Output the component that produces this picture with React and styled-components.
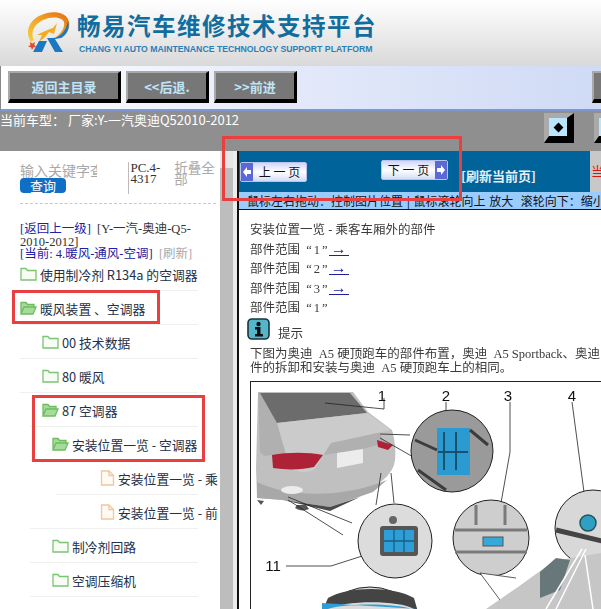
import React from "react";
import styled, { createGlobalStyle } from "styled-components";

const cjk = `"Noto Sans CJK SC", "Liberation Sans", sans-serif`;
const serif = `"Liberation Serif", "Noto Sans CJK SC", serif`;

const GlobalStyle = createGlobalStyle`
  html, body { margin: 0; padding: 0; background: #fff; overflow: hidden; }
  * { box-sizing: border-box; }
`;

const treeRows = [
  { label: "使用制冷剂 R134a 的空调器", indent: 20, line: 0, icon: "closed" },
  { label: "暖风装置 、空调器", indent: 20, line: 0, icon: "open" },
  { label: "00 技术数据", indent: 42, line: 0, icon: "closed" },
  { label: "80 暖风", indent: 42, line: 0, icon: "closed" },
  { label: "87 空调器", indent: 42, line: 10, icon: "open" },
  { label: "安装位置一览 - 空调器", indent: 52, line: 10, icon: "open" },
  { label: "安装位置一览 - 乘客车厢外的部件", indent: 100, line: 36, icon: "doc" },
  { label: "安装位置一览 - 前部车厢", indent: 100, line: 10, icon: "doc" },
  { label: "制冷剂回路", indent: 52, line: 10, icon: "closed" },
  { label: "空调压缩机", indent: 52, line: 10, icon: "closed" },
];

const ranges = ["1", "2", "3"];

const TreeIcon = ({ type }) => {
  if (type === "doc") {
    return (
      <svg width="15" height="16" viewBox="0 0 15 16" fill="#fffaf4" stroke="#f0c89c" strokeWidth="1.3">
        <path d="M1.5 1h7.5l4.5 4.5V15h-12zM9 1v4.5h4.5" />
      </svg>
    );
  }
  if (type === "open") {
    return (
      <svg width="17" height="14" viewBox="0 0 17 14" fill="#a6dc9a" stroke="#6fbb62" strokeWidth="1.3">
        <path d="M1 13V1.5h5l1.5 2H14V6M1 13l3-7h12l-3 7z" />
      </svg>
    );
  }
  return (
    <svg width="17" height="14" viewBox="0 0 17 14" fill="#f7fcf5" stroke="#7cc474" strokeWidth="1.3">
      <path d="M1 13V1.5h5l1.5 2H16V13z" />
    </svg>
  );
};

const Logo = () => (
  <svg width="46" height="41" viewBox="0 0 46 41">
    <defs>
      <linearGradient id="ring" x1="0" y1="1" x2="1" y2="0">
        <stop offset="0" stopColor="#f8d040" />
        <stop offset=".6" stopColor="#f09a20" />
        <stop offset="1" stopColor="#e56a14" />
      </linearGradient>
    </defs>
    <path d="M6 30C0 21 3 10 14 4 25-2 39-1 43 7c3 6 1 13-6 19l-6-1c6-5 9-10 8-15-2-5-12-6-21-2C9 12 5 21 9 28z" fill="url(#ring)" />
    <path d="M12 23c5-3 10-5 16-7l4-5-3 11-5-2-4 5-6 5 3-7z" fill="#f5ab1e" />
    <path d="M5 30l2.5 1.6L10 30l-.7 3 2.2 2-3 .2L7 38l-1-2.8-3-.4 2.4-1.9z" fill="#e2502a" />
    <path d="M43 9c2 6 0 13-7 17l-6 1 8 13h-8l-8-14h5c8 0 14-7 16-17z" fill="#1b78c2" />
    <path d="M14 29h8l-5 11H8z" fill="#1b78c2" />
  </svg>
);

const InfoIcon = () => (
  <svg width="23" height="22" viewBox="0 0 23 22">
    <rect x="1" y="1" width="21" height="20" rx="4" fill="#55b5c9" stroke="#16333d" strokeWidth="1.6" />
    <circle cx="11.5" cy="6" r="2.2" fill="#111" />
    <path d="M8 9h5.5v7H16v2.5H8V16h2v-4.5H8z" fill="#111" />
  </svg>
);

const NavArrow = ({ left }) => (
  <svg width="8" height="10" viewBox="0 0 8 10">
    <path d={left ? "M0 5l4-5v3h4v4H4v3z" : "M8 5L4 0v3H0v4h4v3z"} fill="#fff" />
  </svg>
);

const Diagram = () => (
  <svg width="350" height="227" viewBox="251 382 350 227">
    <rect x="251" y="382" width="350" height="227" fill="#fff" />
    <path d="M258 392h95l15 20 24 18c3 10 4 22 3 30-1 10-8 18-20 26-14 9-30 16-45 21-18-3-34-6-47-7l-26-2-1-30z" fill="#c0c0c0" />
    <path d="M258 392l2 60 4 4 8-1 51 0 14-2 26-4 22-6-17-30-90 10-17-30z" fill="#b0b0b0" />
    <path d="M260 393h90l17 20-90 10z" fill="#6c6c6c" />
    <path d="M277 423l90-10 24 17-60 13-17 27c-8 3-16 2-22 0l-5-12-10-35z" fill="#cbcbcb" />
    <path d="M272 455c16-3 36-3 51 0l-9 12c-12 3-28 3-41 1z" fill="#ad2237" />
    <path d="M377 440l16 5-5 5-10-3z" fill="#ad2237" />
    <path d="M337 453l26-4v14l-26 5z" fill="#ececec" />
    <path d="M257 482c32 16 88 16 130-2l-14 12-43 15-47-7-26-2z" fill="#a8a8a8" />
    <path d="M283 500l47 7 30-10-30 14z" fill="#4a4a4a" />
    <ellipse cx="292" cy="490" rx="11" ry="4" fill="#ececec" />
    <path d="M257 500l4 5 3-4zM295 508c4 3 10 3 14 1l-3-4h-9z" fill="#555" />

    <g fill="none" stroke="#222" strokeWidth=".8">
      <path d="M325 403l59 6v-11" />
      <path d="M380 434l30 1M380 438l35 20" />
      <path d="M446 402v26" />
      <path d="M510 402v50l-15 85" />
      <path d="M572 402l16 120" />
      <path d="M288 497l64 26M288 500l55 35M381 473l-5 32M391 473l3 30" />
      <path d="M286 566h45l50-16" />
    </g>

    <circle cx="452" cy="451" r="41" fill="#9a9a9a" stroke="#222" />
    <path d="M437 428h33v47h-33z" fill="#2a9ad0" />
    <path d="M444 432v38M456 432v38M438 452h30" stroke="#17516e" strokeWidth="2" />
    <path d="M415 440l22 10M470 430l18 15M418 470l28 20" stroke="#3c3c3c" strokeWidth="3" fill="none" />

    <circle cx="395" cy="541" r="37" fill="#dcdcdc" stroke="#222" />
    <rect x="380" y="526" width="38" height="30" rx="3" fill="#555" />
    <path d="M384 530h30v22h-30z" fill="#2d9fd6" />
    <path d="M394 530v22M404 530v22M384 541h30" stroke="#1a5d80" strokeWidth="1.3" />
    <circle cx="393" cy="520" r="4" fill="#666" />

    <circle cx="491" cy="538" r="38" fill="#cecece" stroke="#222" />
    <path d="M455 530h72M455 552h72M476 505v20M505 505v20" stroke="#7a7a7a" strokeWidth="3" fill="none" />
    <rect x="483" y="537" width="20" height="9" fill="#35a9dc" stroke="#555" />

    <circle cx="593" cy="528" r="38" fill="#d8d8d8" stroke="#222" />
    <path d="M556 530l50 12" stroke="#444" strokeWidth="5" fill="none" />
    <circle cx="588" cy="523" r="8" fill="#2f9fc4" stroke="#255" strokeWidth="1.5" />

    <path d="M486 609l32-22 36-26 47-8v56z" fill="#c6c6c6" />
    <path d="M540 572l16-14 14 2-10 30-20 8z" fill="#68787a" />
    <path d="M516 578l-36-5 20 27" fill="#fff" stroke="#333" strokeWidth=".8" />
    <path d="M546 609l36-60M556 609l30-60M585 555l8 54" stroke="#fff" strokeWidth="1.5" fill="none" />

    <circle cx="370" cy="645" r="58" fill="#dcdcdc" stroke="#222" />
    <path d="M322 612c10-12 85-14 96 0l-4-14c-20-12-66-12-86 0z" fill="#444" />
    <path d="M322 612c10-10 85-10 96 0v-3l-96-6z" fill="#2d9fd6" />

    <g fontFamily='"Liberation Sans", sans-serif' fontSize="15" fill="#111" textAnchor="middle">
      <text x="382" y="401">1</text>
      <text x="446" y="401">2</text>
      <text x="508" y="401">3</text>
      <text x="572" y="401">4</text>
      <text x="273" y="571">11</text>
    </g>
  </svg>
);

export default function App() {
  return (
    <Page>
      <GlobalStyle />
      <Header>
        <Logo />
        <Brand>
          <BrandTitle>畅易汽车维修技术支持平台</BrandTitle>
          <BrandSub>CHANG YI AUTO MAINTENANCE TECHNOLOGY SUPPORT PLATFORM</BrandSub>
        </Brand>
      </Header>
      <Toolbar>
        <BevelButton $width={113}>返回主目录</BevelButton>
        <BevelButton $width={83}>&lt;&lt;后退.</BevelButton>
        <BevelButton $width={83}>&gt;&gt;前进</BevelButton>
        <ToolbarRight>
          <BevelButton $width={40} />
        </ToolbarRight>
      </Toolbar>
      <CarBar>
        <span>当前车型： 厂家:Y-一汽奥迪Q52010-2012</span>
        <SquareGroup>
          <SquareButton>
            <Diamond />
          </SquareButton>
          <SquareButton />
        </SquareGroup>
      </CarBar>
      <Main>
        <Sidebar>
          <SearchRow>
            <SearchBox>
              <KeywordHint>输入关键字查询</KeywordHint>
              <QueryButton>查询</QueryButton>
            </SearchBox>
            <PartCode>PC.4-4317</PartCode>
            <FoldAll>折叠全部</FoldAll>
          </SearchRow>
          <Crumbs>
            <BlueLink>[返回上一级]</BlueLink> &nbsp;[Y-一汽-奥迪-Q5-
            <br />
            2010-2012]
            <br />
            <BlueLink>[当前: 4.暖风-通风-空调]</BlueLink> &nbsp;<Muted>[刷新]</Muted>
          </Crumbs>
          {treeRows.map((row) => (
            <TreeRow key={row.label} $indent={row.indent} $line={row.line}>
              <TreeIcon type={row.icon} />
              <span>{row.label}</span>
            </TreeRow>
          ))}
        </Sidebar>
        <ScrollTrack>
          <ScrollThumb />
        </ScrollTrack>
        <Gutter />
        <Content>
          <BlueBar>
            <PagerButton $top={11} $left={1}>
              <PagerArrow><NavArrow left /></PagerArrow>
              <PagerLabel>上 一 页</PagerLabel>
            </PagerButton>
            <PagerButton $top={9} $left={142}>
              <PagerLabel>下 一 页</PagerLabel>
              <PagerArrow><NavArrow /></PagerArrow>
            </PagerButton>
            <Refresh>[刷新当前页]</Refresh>
            <RedTail>当</RedTail>
          </BlueBar>
          <HintBar>鼠标左右拖动：控制图片位置 | 鼠标滚轮向上 放大&nbsp; 滚轮向下：缩小</HintBar>
          <Article>
            <ArticleText>
              <Line>安装位置一览 - 乘客车厢外的部件</Line>
              {ranges.map((n) => (
                <Line key={n}>
                  部件范围 &nbsp;<Quote>“{n}”</Quote><ArrowLink>→</ArrowLink>
                </Line>
              ))}
              <Line>部件范围 &nbsp;<Quote>“1”</Quote></Line>
              <TipRow>
                <InfoIcon />
                <span>提示</span>
              </TipRow>
              <Para>
                下图为奥迪 &nbsp;A5 硬顶跑车的部件布置，奥迪 &nbsp;A5 Sportback、奥迪 A5 敞篷跑车部
                <br />
                件的拆卸和安装与奥迪 &nbsp;A5 硬顶跑车上的相同。
              </Para>
            </ArticleText>
            <DiagramFrame>
              <Diagram />
            </DiagramFrame>
          </Article>
        </Content>
      </Main>
      <RedBox $x={222} $y={136} $w={240} $h={65} />
      <RedBox $x={12} $y={290} $w={148} $h={34} />
      <RedBox $x={32} $y={395} $w={173} $h={67} />
    </Page>
  );
}

const Page = styled.div`
  position: relative;
  width: 601px;
  height: 609px;
  overflow: hidden;
  font-family: ${cjk};
`;

const Header = styled.div`
  display: flex;
  align-items: flex-start;
  gap: 6px;
  height: 66px;
  padding: 12px 0 0 25px;
  background: linear-gradient(#fff, #d9d9d9);

  & svg {
    flex: none;
  }
`;

const Brand = styled.div`
  display: flex;
  flex-direction: column;
  margin-top: -2px;
`;

const BrandTitle = styled.div`
  font-size: 23.5px;
  font-weight: 700;
  line-height: 30px;
  letter-spacing: 1.5px;
  color: #126d9f;
  white-space: nowrap;
`;

const BrandSub = styled.div`
  margin-top: 3px;
  margin-left: 2px;
  font-family: "Liberation Sans", sans-serif;
  font-size: 8.7px;
  font-weight: 700;
  line-height: 12px;
  color: #2a7fb8;
  white-space: nowrap;
`;

const Toolbar = styled.div`
  display: flex;
  align-items: flex-start;
  gap: 5px;
  height: 45px;
  padding: 5px 0 0 7px;
  background: linear-gradient(90deg, #fff 0%, #e3e9fa 50%, #cfdaf5 100%);
  border-bottom: 2px solid #7c97d3;
  border-left: 1px solid #888;
`;

const ToolbarRight = styled.div`
  margin-left: auto;
  margin-right: -31px;
`;

const BevelButton = styled.div`
  flex: none;
  width: ${(p) => p.$width}px;
  height: 32px;
  display: flex;
  align-items: center;
  justify-content: center;
  background: #777;
  border-style: solid;
  border-width: 2px 3px 4px 2px;
  border-color: #a9a9a9 #000 #000 #a9a9a9;
  font-size: 13px;
  font-weight: 700;
  color: #bfe4f8;
`;

const CarBar = styled.div`
  display: flex;
  justify-content: space-between;
  height: 40px;
  background: #8f8f8f;
  color: #fff;
  font-size: 13px;
  line-height: 18px;
`;

const SquareGroup = styled.div`
  display: flex;
  gap: 20px;
  padding-top: 2px;
  margin-right: -23px;
`;

const SquareButton = styled.div`
  width: 30px;
  height: 30px;
  display: flex;
  align-items: center;
  justify-content: center;
  background: #b9e6fb;
  border-style: solid;
  border-width: 5px 7px 7px 5px;
  border-color: #aaa #000 #000 #aaa;
`;

const Diamond = styled.div`
  width: 7px;
  height: 7px;
  background: #000;
  transform: rotate(45deg);
`;

const Main = styled.div`
  display: flex;
  height: 458px;
`;

const Sidebar = styled.div`
  flex: none;
  width: 220px;
  overflow: hidden;
  background: #fff;
  border-right: 2px solid #fff;
`;

const SearchRow = styled.div`
  display: flex;
  height: 53px;
  margin: 0 2px 0 20px;
  padding-top: 11px;
  border-bottom: 1px dashed #c8c8c8;
`;

const SearchBox = styled.div`
  width: 109px;
`;

const KeywordHint = styled.div`
  width: 77px;
  overflow: hidden;
  font-size: 14px;
  line-height: 17px;
  color: #a8a8a8;
  white-space: nowrap;
`;

const QueryButton = styled.div`
  width: 46px;
  height: 15px;
  margin-top: -1px;
  border-radius: 4px;
  background: #0f6fc6;
  color: #fff;
  font-size: 13px;
  line-height: 15px;
  text-align: center;
`;

const PartCode = styled.div`
  width: 46px;
  height: 32px;
  padding-left: 1px;
  border-left: 1px solid #bbb;
  font-family: ${serif};
  font-size: 13px;
  line-height: 11px;
  color: #333;
`;

const FoldAll = styled.div`
  width: 42px;
  font-size: 13.5px;
  line-height: 11px;
  color: #aaa;
`;

const Crumbs = styled.div`
  padding: 19px 0 0 20px;
  height: 53px;
  font-family: ${serif};
  font-size: 12.5px;
  line-height: 12.5px;
  color: #333;
  white-space: nowrap;
`;

const BlueLink = styled.span`
  color: #2020a8;
`;

const Muted = styled.span`
  color: #aaa;
`;

const TreeRow = styled.div`
  position: relative;
  display: flex;
  align-items: center;
  gap: 3px;
  height: 34px;
  padding-left: ${(p) => p.$indent}px;
  font-size: 12.8px;
  color: #223148;
  white-space: nowrap;

  & svg {
    flex: none;
  }

  &::after {
    content: "";
    position: absolute;
    left: ${(p) => 20 + p.$line}px;
    width: ${(p) => 178 - p.$line}px;
    bottom: 0;
    border-bottom: 1px solid #efefef;
  }
`;

const ScrollTrack = styled.div`
  flex: none;
  width: 13px;
  background: #bdbdbd;
`;

const ScrollThumb = styled.div`
  height: 17px;
  background: #e6e6e6;
`;

const Gutter = styled.div`
  flex: none;
  width: 6px;
  background: #ececec;
  border-right: 2px solid #111;
`;

const Content = styled.div`
  flex: 1;
  min-width: 0;
  background: #fff;
`;

const BlueBar = styled.div`
  position: relative;
  height: 41px;
  background: #00649b;
`;

const PagerButton = styled.div`
  position: absolute;
  top: ${(p) => p.$top}px;
  left: ${(p) => p.$left}px;
  display: flex;
  height: 20px;
  width: 67px;
  border: 1px solid #b8c4ee;
  background: linear-gradient(#cfd6f6, #fff 50%, #d5dbf6);
  border-radius: 2px;
`;

const PagerArrow = styled.div`
  flex: none;
  width: 12px;
  display: flex;
  align-items: center;
  justify-content: center;
  background: #5a68d8;
`;

const PagerLabel = styled.div`
  flex: 1;
  text-align: center;
  font-size: 12px;
  line-height: 17px;
  color: #111;
`;

const Refresh = styled.div`
  position: absolute;
  left: 222px;
  top: 16px;
  font-size: 13px;
  font-weight: 700;
  line-height: 18px;
  color: #e8eef5;
`;

const RedTail = styled.div`
  position: absolute;
  right: 0;
  top: 0;
  width: 11px;
  height: 41px;
  overflow: hidden;
  padding: 12px 0 0 1px;
  background: #c8c8c8;
  color: #e01010;
  font-size: 13px;
  line-height: 16px;
`;

const HintBar = styled.div`
  height: 18px;
  padding-left: 8px;
  background: #99ccff;
  border-bottom: 1px solid #111;
  font-size: 12px;
  line-height: 17px;
  color: #111;
  white-space: nowrap;
  word-spacing: 1px;
`;

const Article = styled.div`
  padding: 11px 0 0 11px;
`;

const ArticleText = styled.div`
  font-family: ${serif};
  font-size: 12.5px;
  color: #3a3a3a;
  white-space: nowrap;
  filter: blur(0.3px);
`;

const Line = styled.div`
  height: 19.5px;
  line-height: 19px;
`;

const Quote = styled.span`
  letter-spacing: 2px;
`;

const ArrowLink = styled.span`
  display: inline-block;
  width: 20px;
  margin-left: -1px;
  border-bottom: 1px solid #1f1f9c;
  line-height: 12px;
  font-size: 16px;
  text-align: center;
  color: #1f1f9c;
`;

const TipRow = styled.div`
  display: flex;
  align-items: flex-end;
  gap: 8px;
  margin-top: -1px;
  margin-left: -3px;
  line-height: 12px;
`;

const Para = styled.div`
  margin-top: 7px;
  line-height: 14px;
`;

const DiagramFrame = styled.div`
  margin-top: 6px;
  height: 230px;
  border-left: 1px solid #222;
  border-top: 1px solid #222;
  line-height: 0;
  overflow: hidden;

  & svg {
    filter: blur(0.25px);
  }
`;

const RedBox = styled.div`
  position: absolute;
  left: ${(p) => p.$x}px;
  top: ${(p) => p.$y}px;
  width: ${(p) => p.$w}px;
  height: ${(p) => p.$h}px;
  border: 3px solid #e8403f;
  pointer-events: none;
`;
